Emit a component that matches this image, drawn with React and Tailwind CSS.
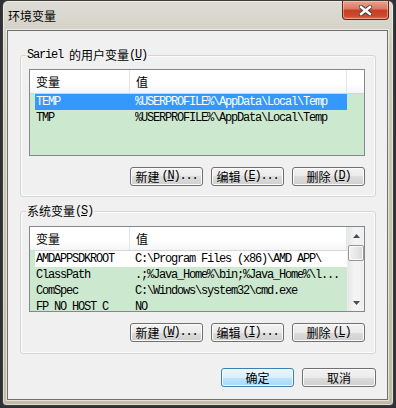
import React from "react";

const mono = "font-['Liberation_Mono','Noto_Sans_CJK_SC',monospace] text-[12px] tracking-[-1.2px]";
const cjk = "font-['Noto_Sans_CJK_SC',sans-serif] text-[12px]";

const userVars = [
  { name: "TEMP", value: "%USERPROFILE%\\AppData\\Local\\Temp" },
  { name: "TMP", value: "%USERPROFILE%\\AppData\\Local\\Temp" },
];

const sysVars = [
  { name: "AMDAPPSDKROOT", value: "C:\\Program Files (x86)\\AMD APP\\" },
  { name: "ClassPath", value: ".;%Java_Home%\\bin;%Java_Home%\\l..." },
  { name: "ComSpec", value: "C:\\Windows\\system32\\cmd.exe" },
  { name: "FP_NO_HOST_C", value: "NO" },
];

const WinButton = ({ label, hotkey, dots = true, primary = false, width = "w-[73px]" }) => (
  <button
    className={`${width} h-[19px] rounded-[3px] border flex items-center justify-center text-black leading-[17px] ${
      primary
        ? "border-[#3c7fb1] bg-[linear-gradient(#eaf6fd_0%,#d9f0fc_50%,#bee6fd_50%,#a7d9f5_100%)] shadow-[inset_0_0_0_1px_#f4fbff]"
        : "border-[#707070] bg-[linear-gradient(#f2f2f2_0%,#ebebeb_50%,#dddddd_50%,#cfcfcf_100%)] shadow-[inset_0_0_0_1px_#fcfcfc]"
    }`}
  >
    <span className={cjk}>{label}</span>
    {hotkey && (
      <span className={`${mono} pl-[2px]`}>
        (<u>{hotkey}</u>){dots ? "..." : ""}
      </span>
    )}
  </button>
);

const Header = ({ full }) => (
  <div className="h-[24px] flex border-b border-[#d5d5d5] bg-[linear-gradient(#ffffff_0%,#ffffff_60%,#f4f5f6_100%)] shrink-0">
    <div className={`w-[100px] pl-[6px] flex items-center border-r border-[#e2e6ea] ${cjk}`}>变量</div>
    <div className={`w-[217px] pl-[6px] flex items-center border-r border-[#e2e6ea] ${cjk}`}>值</div>
    {full && <div className="flex-1" />}
  </div>
);

const Rows = ({ rows, selected, white }) => (
  <div className="flex flex-col">
    {rows.map((r, i) => (
      <div
        key={r.name}
        className={`ml-[5px] w-[312px] h-[16px] shrink-0 flex items-center whitespace-nowrap overflow-hidden ${mono} ${
          i === selected ? "bg-[#3399ff] text-white" : i === white ? "bg-white text-black" : "text-black"
        }`}
      >
        <div className="w-[100px] pl-[1px] overflow-hidden">{r.name}</div>
        <div className="flex-1 overflow-hidden">{r.value}</div>
      </div>
    ))}
  </div>
);

const Arrow = ({ up }) => (
  <svg width="7" height="4" viewBox="0 0 7 4">
    <path d={up ? "M3.5 0 L7 4 L0 4 Z" : "M0 0 L7 0 L3.5 4 Z"} fill="#4d4d4d" />
  </svg>
);

const ScrollBar = () => (
  <div className="w-[17px] flex flex-col bg-[linear-gradient(90deg,#e6e6e6,#f4f4f4_40%,#f0f0f0)] border-l border-[#ececec]">
    <div className="h-[17px] flex items-center justify-center">
      <Arrow up />
    </div>
    <div className="mt-[1px] h-[16px] rounded-[2px] border border-[#979797] bg-[linear-gradient(90deg,#f3f3f3,#e8e8e8_50%,#d8d8d8)] shadow-[inset_0_0_0_1px_#fafafa]" />
    <div className="flex-1" />
    <div className="h-[17px] flex items-center justify-center">
      <Arrow />
    </div>
  </div>
);

const GroupBox = ({ title, height, children }) => (
  <div className={`relative ml-[12px] w-[356px] ${height} rounded-[3px] border border-[#d5d5d5] shadow-[inset_0_0_0_1px_#fbfbfb]`}>
    <div className="absolute left-[5px] top-[-8px] px-[1px] bg-[#f0f0f0] leading-[14px] flex items-center text-black whitespace-pre">
      {title}
    </div>
    {children}
  </div>
);

export default function App() {
  return (
    <div className="w-[396px] h-[408px] bg-[#2e3138] overflow-hidden">
      <div className="ml-[2px] w-[392px] h-[406px] rounded-t-[6px] rounded-b-[4px] border border-[#3f3d36] bg-[linear-gradient(180deg,#dddcd5_0%,#d0cdbf_12%,#c7c2ae_60%,#c1bca7_100%)] shadow-[inset_0_0_0_1px_rgba(255,255,255,0.45)] flex flex-col">
        <div className="h-[29px] flex justify-between shrink-0">
          <span className={`pl-[5px] pt-[7px] leading-[16px] text-black ${cjk}`}>环境变量</span>
          <div className="mr-[4px] w-[47px] h-[19px] rounded-b-[4px] border border-t-0 border-[#6a2314] bg-[linear-gradient(#e9a493_0%,#dc7560_45%,#c63d22_50%,#cf4a30_85%,#e0785e_100%)] shadow-[inset_0_0_0_1px_rgba(255,220,210,0.45)] flex items-center justify-center">
            <svg width="13" height="11" viewBox="0 0 13 11">
              <path d="M2 2 L11 9 M11 2 L2 9" stroke="#3b3b3b" strokeWidth="4.2" strokeLinecap="square" />
              <path d="M2 2 L11 9 M11 2 L2 9" stroke="#ffffff" strokeWidth="2.4" strokeLinecap="square" />
            </svg>
          </div>
        </div>

        <div className="ml-[4px] w-[381px] h-[370px] border border-[#6f6f6f] bg-[#f0f0f0] shadow-[0_0_0_1px_rgba(255,255,255,0.55)] flex flex-col">
          <div className="mt-[24px]">
            <GroupBox
              height="h-[142px]"
              title={
                <>
                  <span className={mono}>Sariel&nbsp;</span>
                  <span className={cjk}>的用户变量</span>
                  <span className={mono}>
                    (<u>U</u>)
                  </span>
                </>
              }
            >
              <div className="ml-[8px] mt-[13px] w-[336px]">
                <div className="h-[87px] border border-[#828790] bg-[#cce8cf] flex flex-col overflow-hidden">
                  <Header full />
                  <Rows rows={userVars} selected={0} />
                </div>
                <div className="mt-[11px] flex justify-end gap-[8px]">
                  <WinButton label="新建" hotkey="N" />
                  <WinButton label="编辑" hotkey="E" />
                  <WinButton label="删除" hotkey="D" dots={false} />
                </div>
              </div>
            </GroupBox>
          </div>

          <div className="mt-[14px]">
            <GroupBox
              height="h-[143px]"
              title={
                <>
                  <span className={cjk}>系统变量</span>
                  <span className={mono}>
                    (<u>S</u>)
                  </span>
                </>
              }
            >
              <div className="ml-[8px] mt-[14px] w-[336px]">
                <div className="h-[86px] border border-[#828790] bg-[#cce8cf] flex overflow-hidden">
                  <div className="w-[317px] flex flex-col overflow-hidden">
                    <Header />
                    <Rows rows={sysVars} white={0} />
                  </div>
                  <ScrollBar />
                </div>
                <div className="mt-[11px] flex justify-end gap-[8px]">
                  <WinButton label="新建" hotkey="W" />
                  <WinButton label="编辑" hotkey="I" />
                  <WinButton label="删除" hotkey="L" dots={false} />
                </div>
              </div>
            </GroupBox>
          </div>

          <div className="mt-[14px] ml-[12px] w-[356px] flex justify-end gap-[8px]">
            <WinButton label="确定" primary />
            <WinButton label="取消" width="w-[74px]" />
          </div>
        </div>
      </div>
    </div>
  );
}
